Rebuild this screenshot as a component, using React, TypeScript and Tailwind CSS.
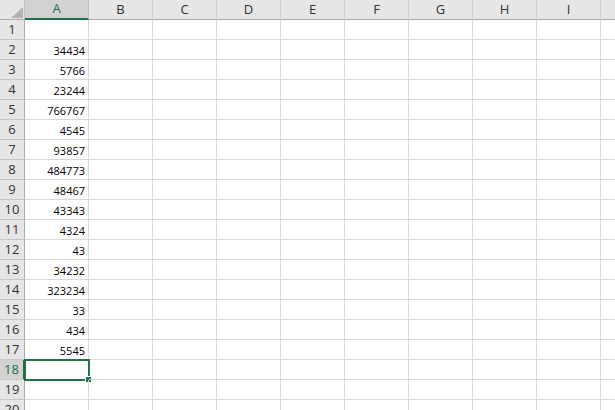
import React from "react";

const cols = ["A", "B", "C", "D", "E", "F", "G", "H", "I", "J"];
const data: Record<number, string> = {
  2: "34434",
  3: "5766",
  4: "23244",
  5: "766767",
  6: "4545",
  7: "93857",
  8: "484773",
  9: "48467",
  10: "43343",
  11: "4324",
  12: "43",
  13: "34232",
  14: "323234",
  15: "33",
  16: "434",
  17: "5545",
};
const rows = Array.from({ length: 20 }, (_, i) => i + 1);
const SEL_ROW = 18;

export default function App() {
  return (
    <div className="w-[615px] h-[410px] overflow-hidden bg-white font-['Open_Sans',sans-serif]">
      <div className="flex w-max">
        <div className="w-[25px] h-[20px] shrink-0 bg-[#e6e6e6] border-r border-b border-r-[#bfbfbf] border-b-[#ababab] relative">
          <svg className="absolute left-[11px] top-[7px]" width="12" height="11" viewBox="0 0 12 11">
            <polygon points="12,0 12,11 0,11" fill="#b4b4b4" />
          </svg>
        </div>
        {cols.map((c) => (
          <div
            key={c}
            className={
              c === "A"
                ? "w-[64px] h-[20px] shrink-0 bg-[#d2d2d2] border-r border-r-[#bfbfbf] border-b-2 border-b-[#217346] flex items-center justify-center text-[13px] text-[#217346]"
                : "w-[64px] h-[20px] shrink-0 bg-[#e6e6e6] border-r border-r-[#d0d0d0] border-b border-b-[#ababab] flex items-center justify-center text-[13px] text-[#333]"
            }
          >
            {c === "J" ? "" : c}
          </div>
        ))}
      </div>
      {rows.map((r) => (
        <div key={r} className="flex w-max">
          <div
            className={
              r === SEL_ROW
                ? "w-[25px] h-[20px] shrink-0 bg-[#d2d2d2] border-r-2 border-r-[#217346] border-b border-b-[#c6c6c6] flex items-center justify-center text-[13px] text-[#217346]"
                : "w-[25px] h-[20px] shrink-0 bg-[#e6e6e6] border-r border-r-[#ababab] border-b border-b-[#c6c6c6] flex items-center justify-center text-[13px] text-[#333]"
            }
          >
            {r}
          </div>
          {cols.map((c) => (
            <div
              key={c}
              className="relative w-[64px] h-[20px] shrink-0 border-r border-b border-[#d9d9d9] flex items-end justify-end pr-[3px] pb-[2px] text-[11px] leading-[12px] text-black"
            >
              {c === "A" && data[r] ? data[r] : ""}
              {c === "A" && r === SEL_ROW && (
                <div className="absolute -left-[1px] -top-[1px] w-[66px] h-[22px] border-2 border-[#217346]">
                  <div className="absolute -right-[4px] -bottom-[4px] w-[7px] h-[7px] bg-[#217346] border border-white" />
                </div>
              )}
            </div>
          ))}
        </div>
      ))}
    </div>
  );
}
